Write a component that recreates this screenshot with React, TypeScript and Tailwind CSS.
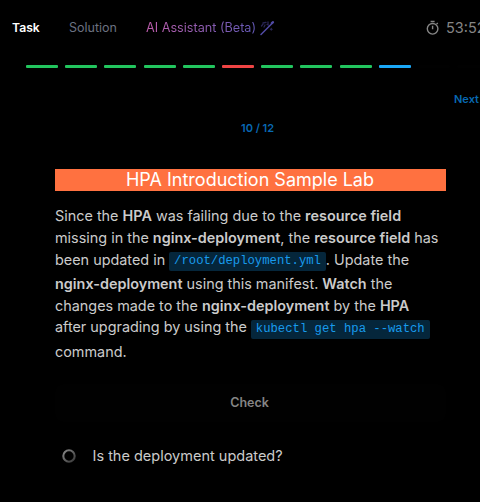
import type { ReactNode } from "react";

const STEPS = [
  "bg-[#22c55e]",
  "bg-[#22c55e]",
  "bg-[#22c55e]",
  "bg-[#22c55e]",
  "bg-[#22c55e]",
  "bg-[#ef4444]",
  "bg-[#22c55e]",
  "bg-[#22c55e]",
  "bg-[#22c55e]",
  "bg-[#1ba8f8]",
  "bg-[#010101]",
  "bg-[#010101]",
];

function Code({ children, align = "align-[0.5px]" }: { children: ReactNode; align?: string }) {
  return (
    <code
      className={`rounded-[2px] bg-[#05263b] px-[0.4em] py-[0.2em] font-['Liberation_Mono',monospace] text-[12.24px] leading-none text-[#189bed] ${align}`}
    >
      {children}
    </code>
  );
}

function B({ children }: { children: ReactNode }) {
  return <strong className="font-semibold">{children}</strong>;
}

function WandIcon() {
  return (
    <svg width="16" height="16" viewBox="0 0 16 16" fill="none" stroke="#514aa5" strokeLinecap="round">
      <path d="M2 14.5 14 2.5" strokeWidth="1.5" />
      <path d="M12.8 3.2 14 2.2" strokeWidth="2.2" />
      <path d="M2.5 6 4 4.2M5 7l1-2M4 3l3-.6M9 2v2M10.5 5.5 8 4.5M12.3 8.5v1.5M11.5 9.3h1.6" strokeWidth="1.3" opacity=".5" />
    </svg>
  );
}

function TimerIcon() {
  return (
    <svg width="14" height="16" viewBox="0 0 14 16" fill="none" stroke="#858585" strokeWidth="1.4">
      <circle cx="6.6" cy="8.8" r="5.3" />
      <path d="M4.6 1.5h4M6.6 5.8v3.5M10.6 4l1.2-1.1" />
    </svg>
  );
}

function SpinnerIcon() {
  return (
    <svg width="14" height="14" viewBox="0 0 14 14" fill="none">
      <defs>
        <linearGradient id="ring" x1="0" y1="0" x2="1" y2="1">
          <stop stopColor="#888" />
          <stop offset="1" stopColor="#383838" />
        </linearGradient>
      </defs>
      <circle cx="7" cy="7" r="5.7" stroke="url(#ring)" strokeWidth="2.1" />
    </svg>
  );
}

export default function App() {
  return (
    <div className="h-[502px] w-[480px] overflow-hidden bg-black font-['Inter',sans-serif] text-[#cbcbcb]">
      <header className="flex h-[55px] items-center pl-3 text-[12.5px] whitespace-nowrap">
        <span className="w-[57px] shrink-0 pt-px text-[12.2px] font-semibold text-white">Task</span>
        <span className="w-[77px] shrink-0 pt-px text-[#6b7280]">Solution</span>
        <span className="w-[110px] shrink-0 bg-gradient-to-r from-[#bd5cab] to-[#6258b5] bg-clip-text pt-px text-[12.65px] text-transparent">
          AI Assistant (Beta)
        </span>
        <span className="ml-[3px] shrink-0">
          <WandIcon />
        </span>
        <span className="ml-[151px] shrink-0">
          <TimerIcon />
        </span>
        <span className="ml-[6px] shrink-0 pt-px text-[14.5px] text-[#858585]">53:52</span>
      </header>
      <div className="flex gap-[7.2px] pt-[10px] pl-[26px]">
        {STEPS.map((color, i) => (
          <span key={i} className={`h-[3px] w-8 shrink-0 rounded-[1px] ${color}`} />
        ))}
      </div>
      <div className="flex h-[62px] pt-[23px] pl-[454px] text-[11px] leading-4 font-semibold text-[#0869b3]">
        <span className="shrink-0">Next</span>
      </div>
      <div className="-mt-[10px] pl-[241px] text-[11px] leading-4 font-semibold text-[#0869b3]">10 / 12</div>
      <main className="w-[446px] pt-[33px] pl-[55px]">
        <h1 className="h-[22px] bg-[#ff7140] pr-px text-center text-[18px] leading-[22px] text-white">
          HPA Introduction Sample Lab
        </h1>
        <div className="mt-[14px] text-[14.4px] leading-[22px] whitespace-nowrap">
          <p>Since the <B>HPA</B> was failing due to the <B>resource field</B></p>
          <p>missing in the <B>nginx-deployment</B>, the <B>resource field</B> has</p>
          <p className="h-[24px]">been updated in <Code>/root/deployment.yml</Code>. Update the</p>
          <p>
            <B>nginx-deployment</B> using this manifest. <B>Watch</B> the
          </p>
          <p className="h-[21px]">changes made to the <B>nginx-deployment</B> by the <B>HPA</B></p>
          <p className="h-[25px]">after upgrading by using the <Code align="align-[-0.5px]">kubectl get hpa --watch</Code></p>
          <p>command.</p>
        </div>
        <button className="mt-[21px] flex h-[38px] w-full items-center justify-center rounded-lg bg-[#010101] pr-[2px] text-[12.5px] font-semibold text-[#858585]">
          Check
        </button>
        <div className="mt-[23px] flex h-[22px] items-center pl-[7px]">
          <SpinnerIcon />
          <span className="ml-[16.5px] text-[14.5px]">Is the deployment updated?</span>
        </div>
      </main>
    </div>
  );
}
